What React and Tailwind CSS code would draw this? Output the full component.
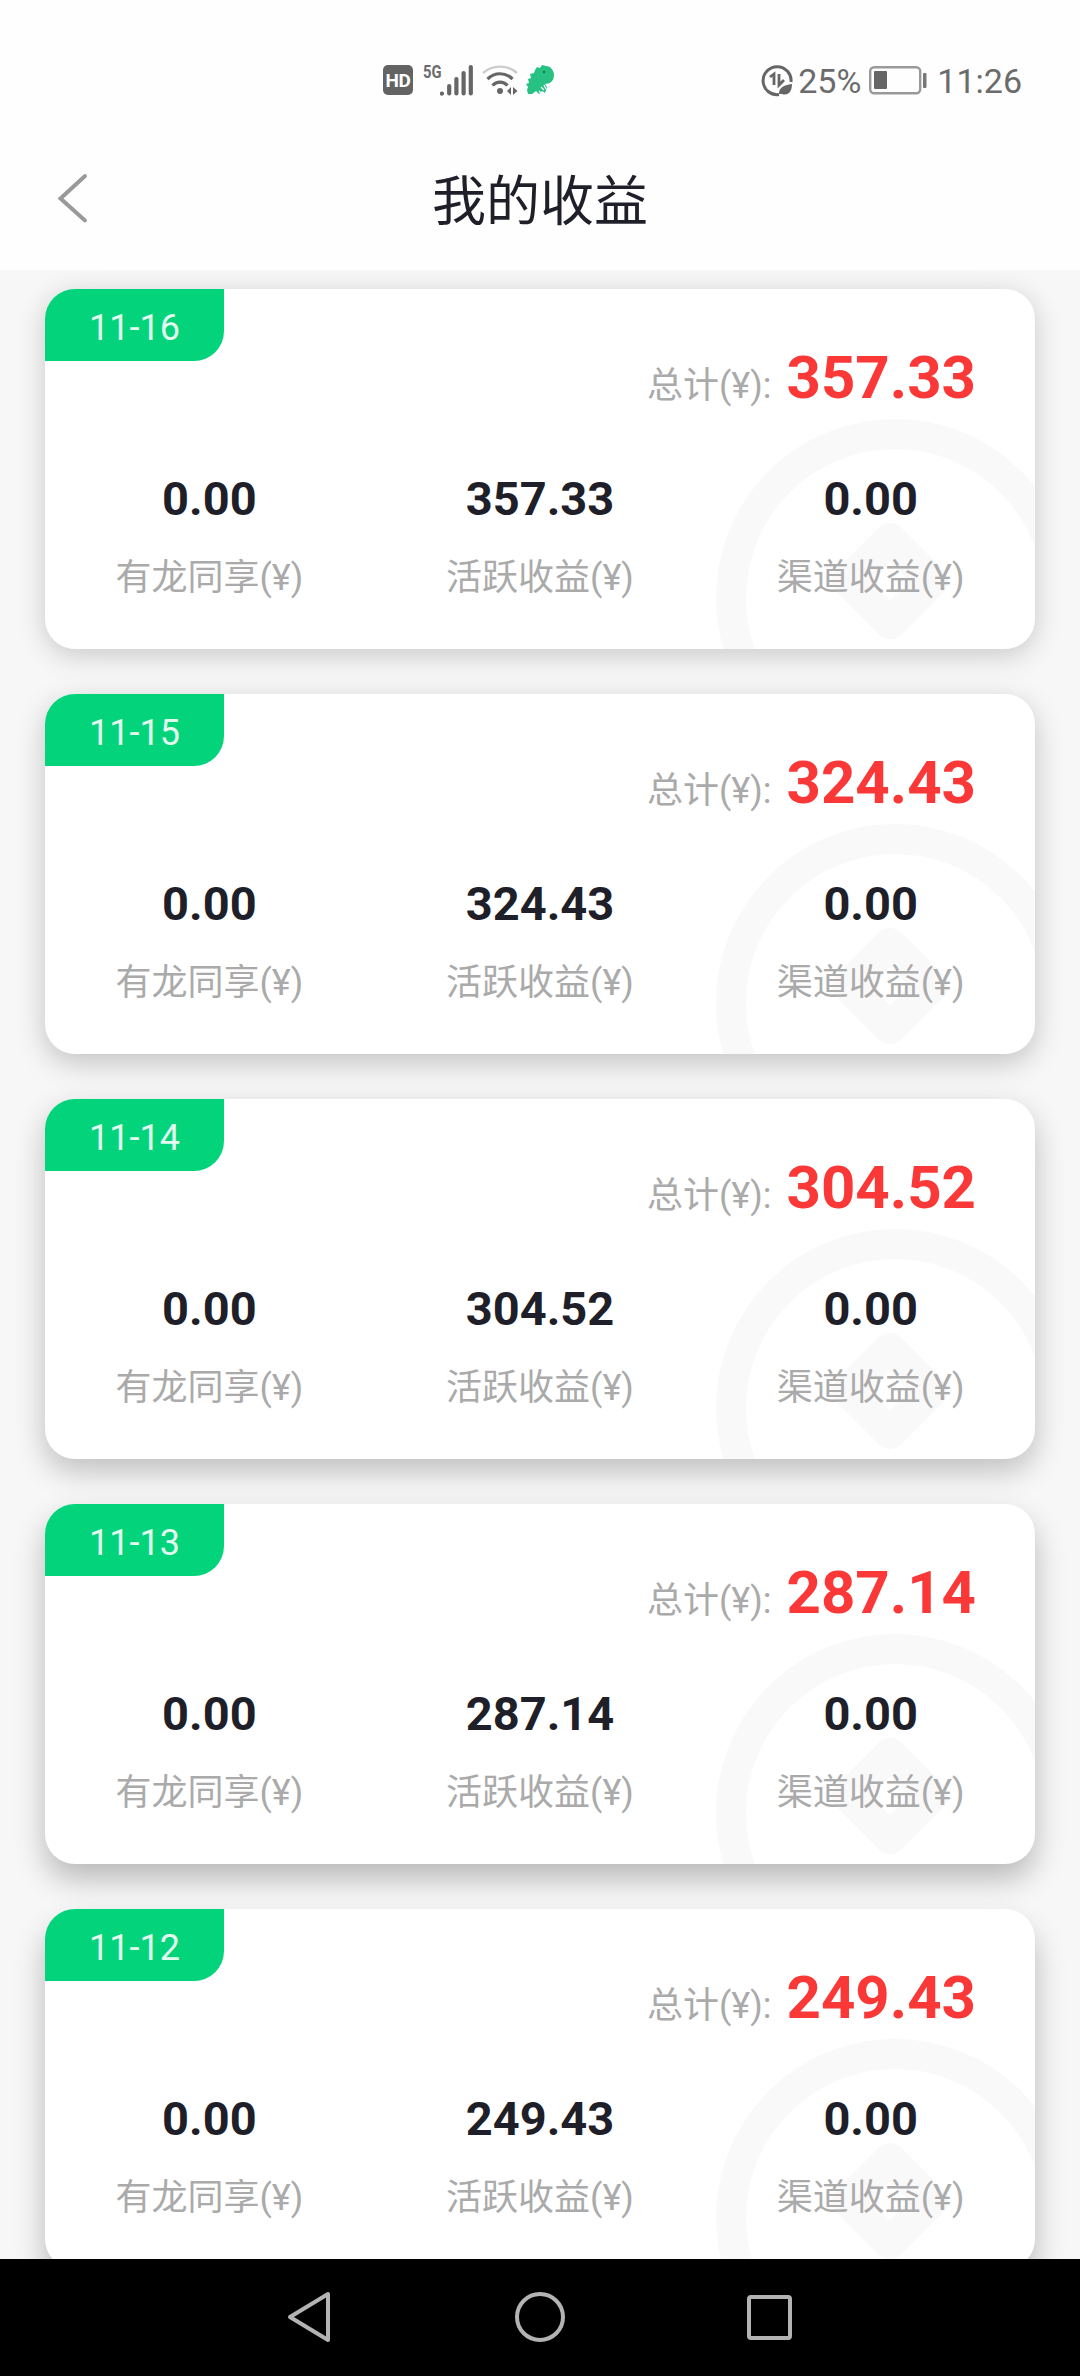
const records = [
  { date: "11-16", total: "357.33", shadow: "shadow-[0_6px_28px_rgba(0,0,0,0.19)]" },
  { date: "11-15", total: "324.43", shadow: "shadow-[0_9px_29px_rgba(0,0,0,0.21)]" },
  { date: "11-14", total: "304.52", shadow: "shadow-[0_12px_30px_rgba(0,0,0,0.23)]" },
  { date: "11-13", total: "287.14", shadow: "shadow-[0_15px_30px_rgba(0,0,0,0.25)]" },
  { date: "11-12", total: "249.43", shadow: "shadow-[0_18px_30px_rgba(0,0,0,0.25)]" },
];

function StatusBar() {
  return (
    <div className="flex h-[160px] shrink-0 items-start justify-between pl-[383px] pr-[58px] pt-[60px] text-[#6b6b6b]">
      <div className="flex h-10 items-center">
        <div className="flex h-[30px] w-[30px] items-center justify-center rounded-[5px] bg-[#636363] text-[19px] font-bold leading-none tracking-[-0.5px] text-white">
          HD
        </div>
        <span className="ml-[10px] -mt-[17px] w-[16px] origin-left scale-x-[0.82] text-[18px] font-bold leading-none">5G</span>
        <svg className="ml-[1px]" width="34" height="32" viewBox="0 0 34 32" stroke="#666" strokeWidth="4.200" strokeLinecap="round">
          <path d="M2 29.500v0.100M9.200 22v7.500M16.400 15v14.500M23.600 9v20.500M30.800 3v26.500" />
        </svg>
        <svg className="ml-[7px]" width="40" height="32" viewBox="0 0 40 32" fill="none" stroke="#666" strokeWidth="3.200">
          <path d="M2 9c9-8 24-9 34 0" stroke="#ccc" strokeWidth="2.400" />
          <path d="M6.500 15c7-7 18-7 25 0M11.500 21.500c4-4.500 11-4.500 15 0" />
          <circle cx="19" cy="27" r="3" fill="#666" stroke="none" />
          <path d="M30 23v8l-4-4zM32 23v8l4.500-4z" fill="#666" stroke="none" />
        </svg>
        <svg className="ml-[5px]" width="30" height="32" viewBox="0 0 30 32">
          <path
            d="M9 6l2-3 3 1 2-3 4 1c5 0 8 5 8 9 0 6-4 9-9 9l2 3-2 6-3-2-3 3-3-3-4 3H2l-1-4 1-3-2-3 3-1-1-4 3-1-1-4 4-1z"
            fill="#27c283"
          />
          <path d="M15 23l3 3M13 27l2 2M18 21l2 4" stroke="#fff" strokeWidth="1.200" />
          <circle cx="18" cy="8" r="1.200" fill="#107a48" />
        </svg>
      </div>
      <div className="flex h-10 items-center text-[34px] leading-10">
        <svg width="33" height="34" viewBox="0 0 33 34" fill="none" stroke="#666" strokeWidth="3">
          <path d="M30 19a14 14 0 1 0-12 12.500" />
          <path d="M9 14l4-3v11M18 11v11l5-5" strokeWidth="2.800" />
          <path d="M18 31c0-6 4-9 13-10 0 8-4 12-10 10z" fill="#666" stroke="none" />
        </svg>
        <span className="ml-[4px] mt-[2px]">25%</span>
        <svg className="ml-[8px]" width="59" height="30" viewBox="0 0 59 30">
          <rect x="1.200" y="2.200" width="50" height="26" rx="4" fill="none" stroke="#999" strokeWidth="2.400" />
          <rect x="5" y="6" width="13" height="18" rx="1" fill="#666" />
          <rect x="54" y="8" width="3.500" height="15" rx="1" fill="#777" />
        </svg>
        <span className="ml-[9px] mt-[2px]">11:26</span>
      </div>
    </div>
  );
}

function TitleBar() {
  return (
    <header className="grid h-[110px] shrink-0 grid-cols-3 items-start">
      <svg className="ml-[56px] mt-[12px]" width="34" height="52" viewBox="0 0 34 52" fill="none" stroke="#999" strokeWidth="4" strokeLinecap="round">
        <path d="M29 4L4.500 26.500 29 48.500" />
      </svg>
      <h1 className="pt-[3px] text-center text-[54px] leading-[80px] text-[#1f1f29]">我的收益</h1>
    </header>
  );
}

/* Faint coin ornament in the card's lower right corner */
function CoinMark() {
  return (
    <svg className="absolute bottom-0 right-0" width="330" height="240" viewBox="0 0 330 240" fill="none" stroke="#faf9fa">
      <circle cx="190" cy="189" r="164" strokeWidth="30" />
      <path d="M185 130l42 42-42 42-42-42z" strokeWidth="32" strokeLinejoin="round" />
    </svg>
  );
}

function Stat({ value, label }) {
  return (
    <div className="flex flex-col items-center">
      <span className="text-[47px] font-bold leading-[56px] text-[#1f1f29]">{value}</span>
      <span className="mt-[25px] text-[36px] leading-[52px] text-[#aaa]">{label}</span>
    </div>
  );
}

function RecordCard({ date, total, shadow }) {
  return (
    <article className={"relative h-[360px] w-[990px] shrink-0 rounded-[30px] bg-white " + shadow}>
      <div className="absolute inset-0 overflow-hidden rounded-[30px]">
        <CoinMark />
      </div>
      <div className="relative flex h-[182px] items-start justify-between">
        <div className="flex h-[72px] w-[179px] items-center justify-center rounded-br-[30px] rounded-tl-[30px] bg-[#03d47c] pt-[5px] text-[36px] text-[#e3fbef]">
          {date}
        </div>
        <div className="mr-[59px] mt-[54px] flex items-baseline">
          <span className="mr-[15px] text-[36px] leading-[52px] text-[#aaa]">总计(¥):</span>
          <span className="text-[60px] font-bold leading-[70px] text-[#fb3838]">{total}</span>
        </div>
      </div>
      <div className="relative -mx-px grid grid-cols-3">
        <Stat value="0.00" label="有龙同享(¥)" />
        <Stat value={total} label="活跃收益(¥)" />
        <Stat value="0.00" label="渠道收益(¥)" />
      </div>
    </article>
  );
}

function NavBar() {
  return (
    <nav className="flex h-[117px] shrink-0 items-center justify-center gap-[177px] bg-black">
      <svg width="52" height="56" viewBox="0 0 52 56" fill="none" stroke="#b3b3b3" strokeWidth="4" strokeLinejoin="round">
        <path d="M43 4v46L5 27z" />
      </svg>
      <svg width="52" height="56" viewBox="0 0 52 56" fill="none" stroke="#b3b3b3" strokeWidth="4">
        <circle cx="26" cy="27" r="23" />
      </svg>
      <svg width="52" height="56" viewBox="0 0 52 56" fill="none" stroke="#b3b3b3" strokeWidth="4">
        <rect x="6" y="7" width="41" height="41" rx="2" />
      </svg>
    </nav>
  );
}

export default function App() {
  return (
    <div className="flex h-[2376px] w-[1080px] flex-col overflow-hidden bg-[#fefefe] font-[Roboto,'Noto_Sans_CJK_SC',sans-serif]">
      <StatusBar />
      <TitleBar />
      <main className="flex min-h-0 flex-1 flex-col items-center gap-[45px] overflow-hidden bg-[#f7f7f7] pt-[19px]">
        {records.map((r) => (
          <RecordCard key={r.date} {...r} />
        ))}
      </main>
      <NavBar />
    </div>
  );
}
